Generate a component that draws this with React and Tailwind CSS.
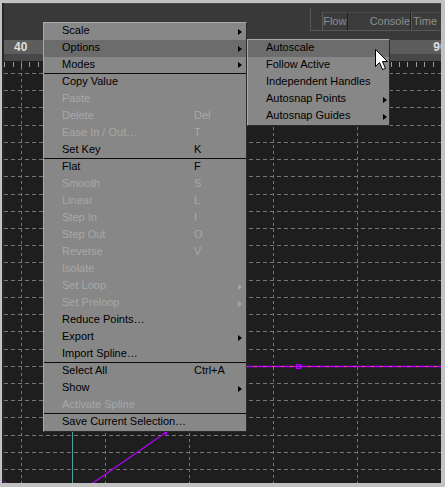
import React from 'react';

const menuItems = [
    { label: 'Scale', sub: true },
    { label: 'Options', sub: true, active: true },
    { label: 'Modes', sub: true, sep: true },
    { label: 'Copy Value' },
    { label: 'Paste', off: true },
    { label: 'Delete', key: 'Del', off: true },
    { label: 'Ease In / Out…', key: 'T', off: true },
    { label: 'Set Key', key: 'K', sep: true },
    { label: 'Flat', key: 'F' },
    { label: 'Smooth', key: 'S', off: true },
    { label: 'Linear', key: 'L', off: true },
    { label: 'Step In', key: 'I', off: true },
    { label: 'Step Out', key: 'O', off: true },
    { label: 'Reverse', key: 'V', off: true },
    { label: 'Isolate', off: true },
    { label: 'Set Loop', sub: true, off: true },
    { label: 'Set Preloop', sub: true, off: true },
    { label: 'Reduce Points…' },
    { label: 'Export', sub: true },
    { label: 'Import Spline…', sep: true },
    { label: 'Select All', key: 'Ctrl+A' },
    { label: 'Show', sub: true },
    { label: 'Activate Spline', off: true, sep: true },
    { label: 'Save Current Selection…' },
];

const subItems = [
    { label: 'Autoscale', active: true },
    { label: 'Follow Active' },
    { label: 'Independent Handles' },
    { label: 'Autosnap Points', sub: true },
    { label: 'Autosnap Guides', sub: true },
];

function Arrow({ off }) {
    return (
        <svg width="4" height="6" viewBox="0 0 4 6" className="block">
            <polygon points="0,0 4,3 0,6" fill={off ? '#a4a4a4' : '#000'} />
        </svg>
    );
}

function Grid() {
    const hLines = [];
    for (let k = 0; k < 24; k++) hLines.push(Math.round(73 + 17.22 * k) + 0.5);
    const vLines = [21.5, 105.5, 189.5, 273.5, 357.5];
    const ticks = [];
    for (let k = -2; k < 51; k++) ticks.push(Math.round(21 + 8.4 * k) + 0.5);

    return (
        <svg width="437" height="422" viewBox="4 61 437 422" className="block">
            {ticks.map((x) => (
                <line key={'t' + x} x1={x} y1="62" x2={x} y2="67" stroke="#9a9a9a" strokeWidth="1" />
            ))}
            {hLines.map((y) => (
                <line key={'h' + y} x1="4" y1={y} x2="441" y2={y} stroke="#767676" strokeWidth="1" strokeDasharray="4 3" />
            ))}
            {vLines.map((x) => (
                <line key={'v' + x} x1={x} y1="61" x2={x} y2="483" stroke="#767676" strokeWidth="1" strokeDasharray="3 3" />
            ))}
            <line x1="72.5" y1="61" x2="72.5" y2="483" stroke="#4aa3a3" strokeWidth="1" />
            {/* curve segments */}
            <line x1="200" y1="366.5" x2="441" y2="366.5" stroke="#b400ff" strokeWidth="1.4" />
            <line x1="200" y1="366.5" x2="441" y2="366.5" stroke="#ff3c8c" strokeWidth="1" strokeDasharray="3 6" />
            <rect x="296.5" y="364.5" width="4" height="4" fill="none" stroke="#b400ff" strokeWidth="1" />
            <line x1="90" y1="485" x2="165" y2="433" stroke="#b400ff" strokeWidth="1.2" />
            <polygon points="163,431 167,431 167,436" fill="#b400ff" />
            <line x1="3" y1="480" x2="6" y2="483" stroke="#b400ff" strokeWidth="1" />
        </svg>
    );
}

export default function App() {
    return (
        <div className="relative w-[445px] h-[487px] overflow-hidden bg-[#c2c2c2] pt-[3px] pl-[2px] pr-[4px] pb-[4px] font-['Liberation_Sans',Arial,sans-serif] text-[11px]">
            <div className="h-full flex flex-col bg-[#393939] border-l-2 border-[#262626]">
                {/* top bar with tabs */}
                <div className="h-[37px] flex justify-end border-t border-[#4b4b4b]">
                    <div className="mt-[4px] w-[131px] h-[23px] border-l border-b border-[#575757] flex items-end pl-[11px] overflow-hidden">
                        <div className="h-[18px] w-[33px] border-l border-t border-r border-l-[#5a5a5a] border-t-[#4a4a4a] border-r-[#222] bg-[#3c3c3c] text-[#8e8e8e] flex items-center justify-center">
                            Flow
                        </div>
                        <div className="h-[18px] w-[67px] border-t border-r border-t-[#4a4a4a] border-r-[#222] bg-[#3c3c3c] text-[#8e8e8e] flex items-center pl-[22px]">
                            Console
                        </div>
                        <div className="h-[18px] w-[30px] shrink-0 border-t border-l border-t-[#4a4a4a] border-l-[#5a5a5a] bg-[#3c3c3c] text-[#8e8e8e] flex items-center pl-[1px] whitespace-nowrap">
                            Time
                        </div>
                    </div>
                </div>
                {/* ruler */}
                <div className="h-[14px] bg-[#5d5d5d] flex items-center overflow-hidden whitespace-nowrap font-bold text-[12px] text-[#dedede]">
                    <span className="ml-[10px]">40</span>
                    <span className="ml-[406px]">90</span>
                </div>
                <div className="h-[7px] bg-[#474747]" />
                <div className="flex-1 bg-[#1e1e1e] overflow-hidden">
                    <Grid />
                </div>
            </div>

            {/* context menu */}
            <div className="absolute left-[43px] top-[22px] w-[204px] bg-[#878787] border border-t-[#a9a9a9] border-l-[#a9a9a9] border-r-[#2a2a2a] border-b-[#2a2a2a]">
                {menuItems.map((it) => (
                    <div
                        key={it.label}
                        className={`h-[17px] flex items-center pl-[18px] pb-[2px] ${it.active ? 'bg-[#6c6c6c]' : ''} ${it.sep ? 'border-b border-[#0c0c0c]' : ''} ${it.off ? 'text-[#a7a7a7]' : 'text-black'}`}
                    >
                        <span className="w-[132px] whitespace-nowrap">{it.label}</span>
                        <span className="w-[40px] whitespace-nowrap">{it.key || ''}</span>
                        <span className="ml-[4px] pt-[2px]">{it.sub && <Arrow off={it.off} />}</span>
                    </div>
                ))}
            </div>

            {/* submenu */}
            <div className="absolute left-[247px] top-[39px] w-[143px] bg-[#878787] border border-t-[#a9a9a9] border-l-[#a9a9a9] border-r-[#2a2a2a] border-b-[#2a2a2a]">
                {subItems.map((it) => (
                    <div key={it.label} className={`h-[17px] flex items-center pl-[18px] pb-[2px] text-black ${it.active ? 'bg-[#6c6c6c]' : ''}`}>
                        <span className="w-[117px] whitespace-nowrap">{it.label}</span>
                        <span className="pt-[2px]">{it.sub && <Arrow />}</span>
                    </div>
                ))}
            </div>

            {/* mouse pointer */}
            <svg className="absolute left-[375px] top-[49px]" width="14" height="23" viewBox="0 0 14 23">
                <path d="M0.5 0.5 L0.5 17.5 L4.5 13.5 L7.5 20.5 L10.5 19.5 L7.5 12.5 L12.5 12.5 Z" fill="#fff" stroke="#000" strokeWidth="1" />
            </svg>
        </div>
    );
}
